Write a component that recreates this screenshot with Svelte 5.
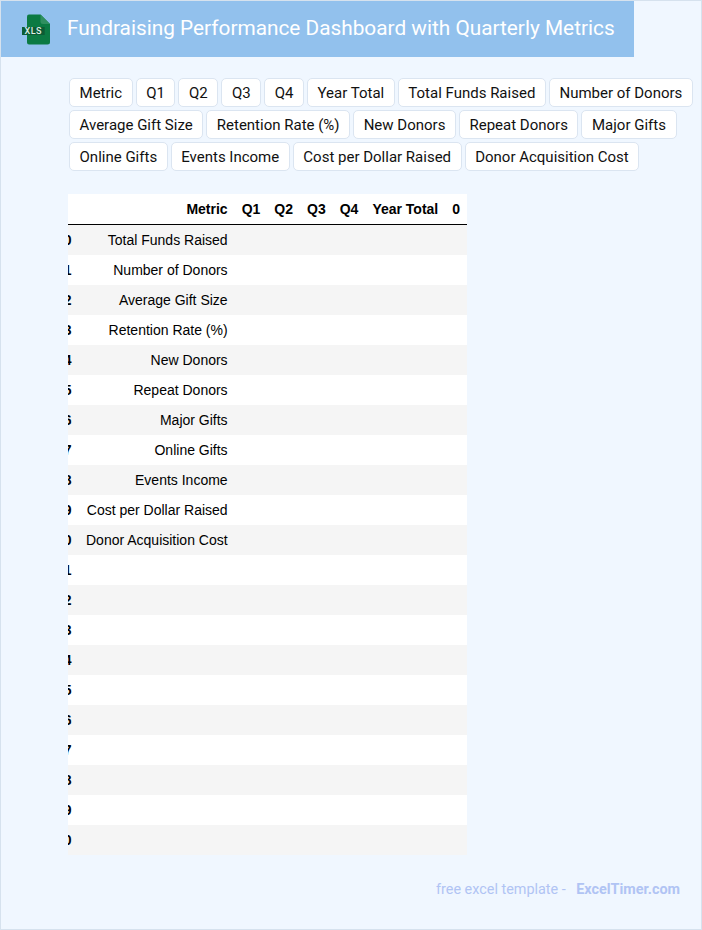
<script>
  const chips = ["Metric","Q1","Q2","Q3","Q4","Year Total","Total Funds Raised","Number of Donors","Average Gift Size","Retention Rate (%)","New Donors","Repeat Donors","Major Gifts","Online Gifts","Events Income","Cost per Dollar Raised","Donor Acquisition Cost"]
  const metrics = chips.slice(6)
  const columns = ["Metric","Q1","Q2","Q3","Q4","Year Total","0"]
  let rows = []
  for ( let i = 0; i <= 20; i++ ) {
    rows.push({ index: i, metric: metrics[i] ?? "" })
  }
</script>

<div class="page">
  <header class="title_bar">
    <svg class="xls_icon" width="29" height="31" viewBox="0 0 29 31">
      <path d="M5 2.5 Q5 0.5 7 0.5 H18.5 L28 10 V28 Q28 30.5 25.5 30.5 H7 Q5 30.5 5 28.5 Z" fill="#0b7a43"/>
      <path d="M18.5 0.5 L28 10 H21 Q18.5 10 18.5 7.5 Z" fill="#2f8f5f"/>
      <rect x="0" y="13" width="22.7" height="8" fill="#0c5c35"/>
      <text x="11.3" y="20" text-anchor="middle" class="xls_text">XLS</text>
    </svg>
    <h1>Fundraising Performance Dashboard with Quarterly Metrics</h1>
  </header>

  <div class="chips">
    {#each chips as chip}
      <span class="chip">{chip}</span>
    {/each}
  </div>

  <div class="table_clip">
    <table>
      <thead>
        <tr>
          <th class="index"></th>
          {#each columns as col}
            <th>{col}</th>
          {/each}
        </tr>
      </thead>
      <tbody>
        {#each rows as row}
          <tr>
            <th class="index">{row.index}</th>
            <td>{row.metric}</td>
            <td></td><td></td><td></td><td></td><td></td><td></td>
          </tr>
        {/each}
      </tbody>
    </table>
  </div>

  <footer class="foot">
    <span>free excel template -</span>
    <b>ExcelTimer.com</b>
  </footer>
</div>

<style>
  :global(body) {
    margin: 0;
    background: #f0f7ff;
  }

  .page {
    box-sizing: border-box;
    width: 702px;
    height: 930px;
    border: 1px solid #d6e2ee;
    background: #f0f7ff;
    overflow: hidden;
  }

  .title_bar {
    display: flex;
    align-items: center;
    gap: 16px;
    width: 633px;
    height: 56px;
    padding-left: 21px;
    box-sizing: border-box;
    background: #92c1ed;
  }

  .xls_icon {
    flex: none;
  }

  .xls_text {
    font-family: "Roboto", sans-serif;
    font-size: 9px;
    font-weight: 500;
    letter-spacing: 0.5px;
    fill: #dfeee6;
  }

  h1 {
    margin: 0 0 2px;
    font-family: "Roboto", sans-serif;
    font-size: 20.8px;
    font-weight: 400;
    color: #fff;
    white-space: nowrap;
  }

  .chips {
    display: flex;
    flex-wrap: wrap;
    gap: 3px;
    margin: 21px 0 0 68px;
    width: 630px;
  }

  .chip {
    padding: 0 9.55px;
    height: 27px;
    line-height: 29px;
    border: 1px solid #dbe5f1;
    border-radius: 5px;
    background: #fff;
    font-family: "Roboto", sans-serif;
    font-size: 15px;
    color: #111;
  }

  .table_clip {
    width: fit-content;
    margin: 23px 0 0 67px;
    overflow: hidden;
    background: #fff;
  }

  table {
    margin-left: -19.1px;
    border-collapse: collapse;
    font-family: "Liberation Sans", Arial, sans-serif;
    font-size: 14px;
    color: #000;
  }

  th, td {
    padding: 7px;
    text-align: right;
    line-height: 16px;
    white-space: nowrap;
  }

  th.index {
    padding-right: 7.5px;
  }

  thead tr {
    border-bottom: 1px solid #000;
  }

  tbody tr:nth-child(odd) {
    background: #f5f5f5;
  }

  .foot {
    display: flex;
    gap: 10.5px;
    justify-content: flex-end;
    margin: 26px 21px 0 0;
    font-family: "Roboto", sans-serif;
    font-size: 14.4px;
    color: #b0c4f4;
  }
</style>
